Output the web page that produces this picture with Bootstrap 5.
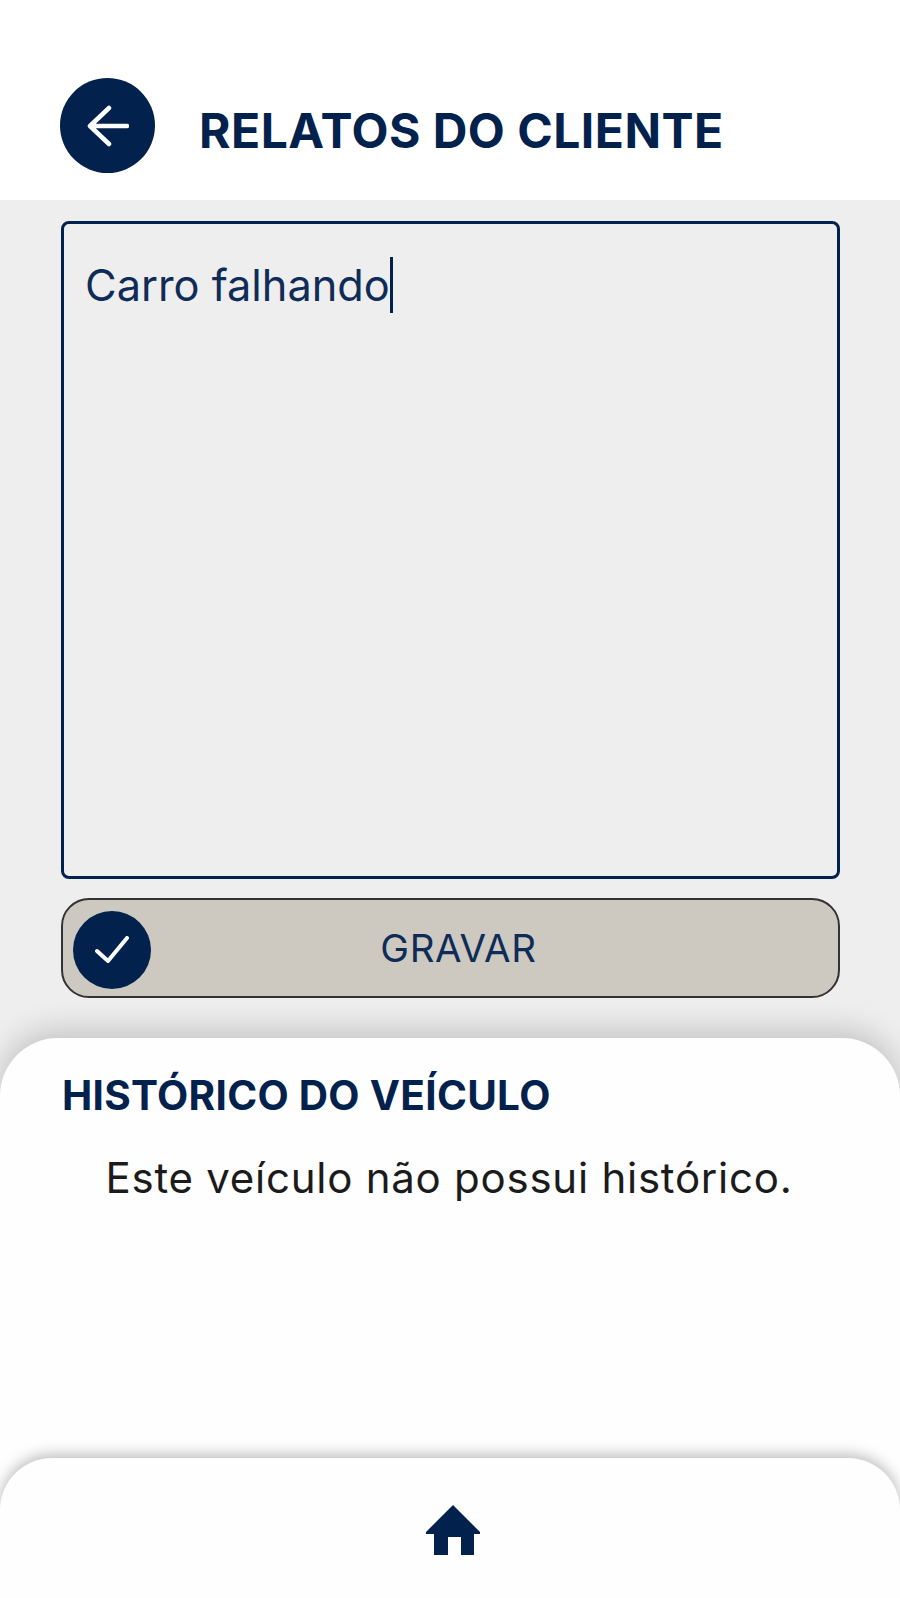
<!DOCTYPE html>
<html lang="pt-BR">
<head>
<meta charset="utf-8">
<title>Relatos do cliente</title>
<link href="https://cdn.jsdelivr.net/npm/bootstrap@5.3.0/dist/css/bootstrap.min.css" rel="stylesheet">
<style>
html, body { margin: 0; height: 1598px; overflow: hidden; background: #eeeeee; }
.app-page { height: 1598px; font-family: Inter, "Liberation Sans", sans-serif; color: #02214d; }
.app-top { flex: none; height: 200px; background: #fff; padding: 78px 0 0 60px; gap: 44px; }
.back-disc { width: 95px; height: 95px; background: #02214d; margin: 0; }
.page-title { font-size: 48px; font-weight: 700; letter-spacing: .5px; color: #02214d; margin: 0; padding-top: 24px; line-height: 58px; }
.work-area { flex: none; height: 838px; background: #eeeeee; padding: 21px 60px 0 61px; }
.note-box { height: 658px; border: 3px solid #02214d; border-radius: 8px; padding: 33px 21px; font-size: 43.3px; line-height: 56px; background: #eeeeee; color: #0e2c57; }
.caret-line { display: inline-block; width: 3px; height: 56px; background: #02214d; vertical-align: top; }
.save-bar { height: 100px; margin-top: 19px; border: 2px solid #333; border-radius: 28px; background: #cdc9c0; padding-left: 10px; position: relative; }
.save-disc { width: 78px; height: 78px; background: #02214d; margin-top: 3px; }
.save-text { position: absolute; left: 0; right: 0; top: 0; bottom: 0; padding: 2px 0 0 16px; font-size: 38.5px; color: #0e2c57; letter-spacing: .6px; }
.history-sheet { flex: none; height: 480px; background: #fefefe; border-radius: 58px 58px 0 0; box-shadow: 0 -8px 30px rgba(0,0,0,.18); padding: 34px 62px 0; position: relative; }
.history-title { font-size: 40.5px; font-weight: 700; color: #02214d; line-height: 48px; margin: 0; letter-spacing: .3px; }
.history-empty { font-size: 42px; line-height: 56px; color: #1b1b1b; margin: 30px 0 0; text-align: center; letter-spacing: .75px; padding-right: 2px; }
.bottom-nav { flex: none; height: 140px; margin-top: -60px; background: #fefefe; border-radius: 52px 52px 0 0; box-shadow: 0 -4px 14px rgba(0,0,0,.25); padding-top: 47px; position: relative; }
.bottom-nav svg { margin-left: 6px; }
</style>
</head>
<body>
<div class="app-page d-flex flex-column">
  <header class="app-top d-flex align-items-start">
    <button type="button" class="back-disc btn rounded-circle border-0 p-0 d-flex align-items-center justify-content-center" aria-label="Voltar">
      <svg width="42" height="42" viewBox="0 0 42 42" fill="none" stroke="#fff" stroke-width="4.5" stroke-linecap="round" stroke-linejoin="round"><path d="M3 21h37M22 3 3 21l19 18"/></svg>
    </button>
    <h1 class="page-title">RELATOS DO CLIENTE</h1>
  </header>
  <main class="work-area">
    <div class="note-box">Carro falhando<span class="caret-line"></span></div>
    <div class="save-bar d-flex align-items-center">
      <span class="save-disc rounded-circle d-flex align-items-center justify-content-center">
        <svg width="34" height="27" viewBox="0 0 34 27" fill="none" stroke="#fff" stroke-width="4" stroke-linecap="round" stroke-linejoin="round"><path d="M2 15l11 10L32 2"/></svg>
      </span>
      <span class="save-text d-flex align-items-center justify-content-center">GRAVAR</span>
    </div>
  </main>
  <section class="history-sheet">
    <h2 class="history-title">HISTÓRICO DO VEÍCULO</h2>
    <p class="history-empty">Este veículo não possui histórico.</p>
  </section>
  <nav class="bottom-nav d-flex justify-content-center align-items-start">
    <svg width="54" height="50" viewBox="0 0 54 50" fill="#02214d"><path d="M27 0 54 27v2h-6v21H35V32H22v18H8V29H0v-2z"/></svg>
  </nav>
</div>
</body>
</html>
